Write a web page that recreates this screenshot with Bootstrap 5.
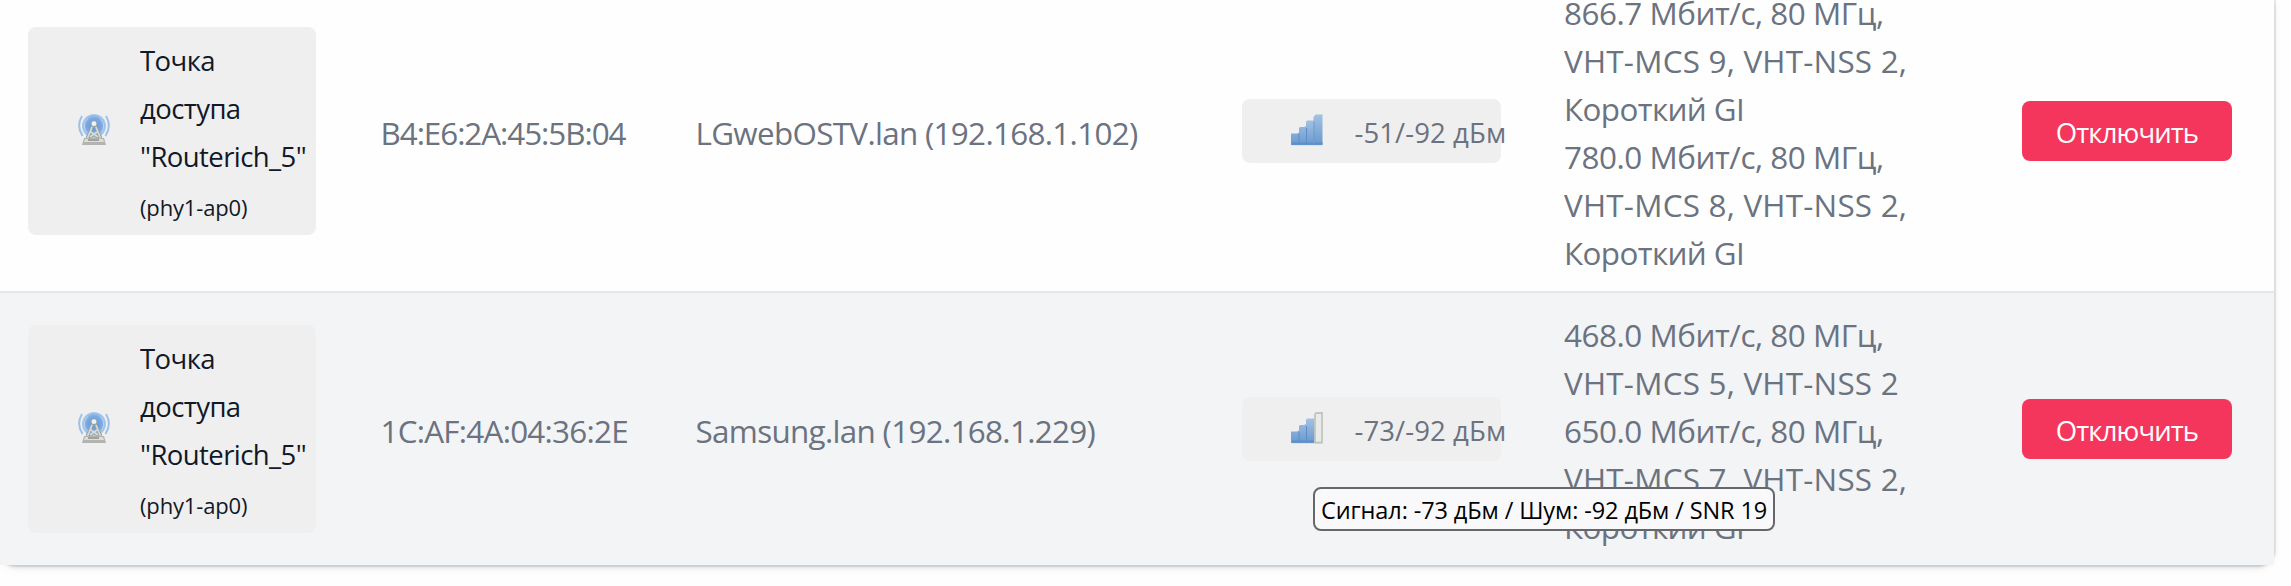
<!DOCTYPE html>
<html lang="ru">
<head>
<meta charset="utf-8">
<meta name="viewport" content="width=device-width, initial-scale=1">
<title>Подключённые клиенты</title>
<link href="https://cdn.jsdelivr.net/npm/bootstrap@5.3.0/dist/css/bootstrap.min.css" rel="stylesheet">
<style>
  body { background: #fefefe; font-family: "Open Sans", "Noto Sans", sans-serif; overflow: hidden; height: 586px; }
  .clients { display: flow-root; width: 2274px; height: 565px; border-radius: 0 0 16px 16px;
    box-shadow: 0 0 0 2px rgba(40,50,60,.08), 0 2px 4px rgba(0,0,0,.15), 0 4px 12px rgba(0,0,0,.04); }
  .clients-table { table-layout: fixed; width: 2274px; margin-top: -29px; border-collapse: separate; border-spacing: 0;
    color: #6b7280; font-size: 31.4px; line-height: 48px; background: #fefefe; }
  .clients-table td { padding: 16px 0 16px 28px; white-space: nowrap; vertical-align: middle; }
  .clients-table tr + tr td { border-top: 2px solid #e5e7eb; background: #f3f4f6; }
  .line { display: block; position: relative; top: 2px; }
  .ap-badge { width: 288px; height: 208px; padding: 8px 0 8px 50px; gap: 30px; background: #efefef; border-radius: 8px;
    color: #111827; font-size: 27.5px; letter-spacing: -.57px; }
  .ap-sub { font-size: 22px; letter-spacing: -.15px; top: 4px; }
  .sig-badge { width: 259px; height: 64px; padding-left: 49px; gap: 31.5px; background: #efefef; border-radius: 8px;
    font-size: 27.5px; letter-spacing: .1px; }
  .glyph { width: 32px; height: 32px; flex: none; position: relative; top: -1px; }
  .mac-a { letter-spacing: -1.04px; } .mac-b { letter-spacing: -.74px; }
  .mac-a, .mac-b, .host { left: -.5px; }
  .host { letter-spacing: -.68px; }
  .rate { letter-spacing: -.45px; } .rate-mcs { letter-spacing: .23px; } .rate-gi { letter-spacing: -.6px; }
  .btn-kick { width: 210px; height: 60px; margin-left: 1px; background: #f5365c; color: #fff; border: 0; border-radius: 8px;
    font-size: 27.5px; letter-spacing: -.9px; line-height: 60px; padding: 2px 0 0; display: block; }
  .hint { left: 1313px; top: 487px; width: 462px; height: 44px; border: 2px solid #66676b; border-radius: 8px;
    background: #f9f9fb; color: #000; font-size: 23.5px; letter-spacing: -.1px; line-height: 42px; padding-left: 6px; white-space: nowrap; }
</style>
</head>
<body>
<svg width="0" height="0" class="position-absolute">
  <defs>
    <linearGradient id="bar" x1="0" y1="0" x2="0" y2="1"><stop offset="0" stop-color="#a3c2e3"/><stop offset="1" stop-color="#6999ce"/></linearGradient>
    <radialGradient id="wave" cx=".5" cy=".5" r=".52"><stop offset="0" stop-color="#5a94da"/><stop offset=".65" stop-color="#7dabe2"/><stop offset="1" stop-color="#b4cfee"/></radialGradient>
    <filter id="soft" x="-10%" y="-10%" width="120%" height="120%"><feGaussianBlur stdDeviation=".6"/></filter>
    <symbol id="antenna" viewBox="0 0 32 32">
      <g filter="url(#soft)">
        <circle cx="16" cy="12" r="12" fill="url(#wave)"/>
        <g fill="none" stroke="#bcd5f1" stroke-width="1"><path d="M10 4.500a9.500 9.500 0 0 0 0 15M22 4.500a9.500 9.500 0 0 1 0 15"/></g>
        <g fill="none" stroke="#9fc1e8" stroke-width="2"><path d="M4 2Q-2 12 4.500 22M28 2Q34 12 27.500 22"/></g>
        <path d="M14.500 12L9 24M17.500 12L23 24M11 24L19 18M21 24L13 18" fill="none" stroke="#969f9f" stroke-width="3"/>
        <path d="M14.500 12L9.500 24M17.500 12L22.500 24M12 23L19 18M20 23L13 18" fill="none" stroke="#d5dadb" stroke-width="1.700"/>
        <path d="M6 24h20l2 7H4z" fill="#b2b4b0"/><path d="M7 25h18l1 3H6z" fill="#dcddd8"/>
        <path d="M10 26h11" stroke="#8d8f89" stroke-width="1.500"/>
        <circle cx="16" cy="10" r="3.500" fill="#9aa6ae"/><circle cx="16" cy="9.700" r="2.400" fill="#f1f1ee"/>
      </g>
    </symbol>
    <symbol id="steps" viewBox="0 0 32 32">
      <g filter="url(#soft)">
        <path d="M0 19.500h6l2-1V14l1-1h4l2-1V8l1-1.500h8V31H0z" fill="url(#bar)"/>
        <path d="M1 29.500h22" stroke="#5f8fc7" stroke-width="2"/>
        <path d="M8 20v11M15.500 14v17" stroke="#5c8dc8" stroke-width="1"/>
        <path d="M1 32h30" stroke="#d0d2d4" stroke-width="1"/>
      </g>
    </symbol>
  </defs>
</svg>

<main class="clients position-relative">
  <table class="clients-table">
    <colgroup><col style="width:353px"><col style="width:315px"><col style="width:546px"><col style="width:322px"><col style="width:457px"><col></colgroup>
    <tbody>
      <tr>
        <td><div class="ap-badge d-flex align-items-center"><svg class="glyph"><use href="#antenna"/></svg>
          <div><span class="line">Точка</span><span class="line">доступа</span><span class="line">"Routerich_5"</span><span class="line ap-sub">(phy1-ap0)</span></div></div></td>
        <td><span class="line mac-a">B4:E6:2A:45:5B:04</span></td>
        <td><span class="line host">LGwebOSTV.lan (192.168.1.102)</span></td>
        <td><div class="sig-badge d-flex align-items-center"><svg class="glyph" viewBox="0 0 32 32"><use href="#steps"/><g filter="url(#soft)"><path d="M22.500 3l2-2.500h7V31h-9z" fill="url(#bar)"/><path d="M23 29.500h8.500" stroke="#5f8fc7" stroke-width="2"/><path d="M23 8v23" stroke="#6c9ad0"/></g></svg><span class="line">-51/-92 дБм</span></div></td>
        <td><span class="line rate">866.7 Мбит/с, 80 МГц,</span><span class="line rate-mcs">VHT-MCS 9, VHT-NSS 2,</span><span class="line rate-gi">Короткий GI</span><span class="line rate">780.0 Мбит/с, 80 МГц,</span><span class="line rate-mcs">VHT-MCS 8, VHT-NSS 2,</span><span class="line rate-gi">Короткий GI</span></td>
        <td><button class="btn btn-kick">Отключить</button></td>
      </tr>
      <tr>
        <td><div class="ap-badge d-flex align-items-center"><svg class="glyph"><use href="#antenna"/></svg>
          <div><span class="line">Точка</span><span class="line">доступа</span><span class="line">"Routerich_5"</span><span class="line ap-sub">(phy1-ap0)</span></div></div></td>
        <td><span class="line mac-b">1C:AF:4A:04:36:2E</span></td>
        <td><span class="line host">Samsung.lan (192.168.1.229)</span></td>
        <td><div class="sig-badge d-flex align-items-center"><svg class="glyph" viewBox="0 0 32 32"><use href="#steps"/><g filter="url(#soft)"><path d="M24 2.500l1-1.500h6v29.500h-7z" fill="#e9ebe7" stroke="#c3c6c0" stroke-width="1.800"/></g></svg><span class="line">-73/-92 дБм</span></div></td>
        <td><span class="line rate">468.0 Мбит/с, 80 МГц,</span><span class="line rate-mcs">VHT-MCS 5, VHT-NSS 2</span><span class="line rate">650.0 Мбит/с, 80 МГц,</span><span class="line rate-mcs">VHT-MCS 7, VHT-NSS 2,</span><span class="line rate-gi">Короткий GI</span></td>
        <td><button class="btn btn-kick">Отключить</button></td>
      </tr>
    </tbody>
  </table>
  <div class="hint position-absolute" role="tooltip">Сигнал: -73 дБм / Шум: -92 дБм / SNR 19</div>
</main>
<script src="https://cdn.jsdelivr.net/npm/bootstrap@5.3.0/dist/js/bootstrap.bundle.min.js"></script>
</body>
</html>
